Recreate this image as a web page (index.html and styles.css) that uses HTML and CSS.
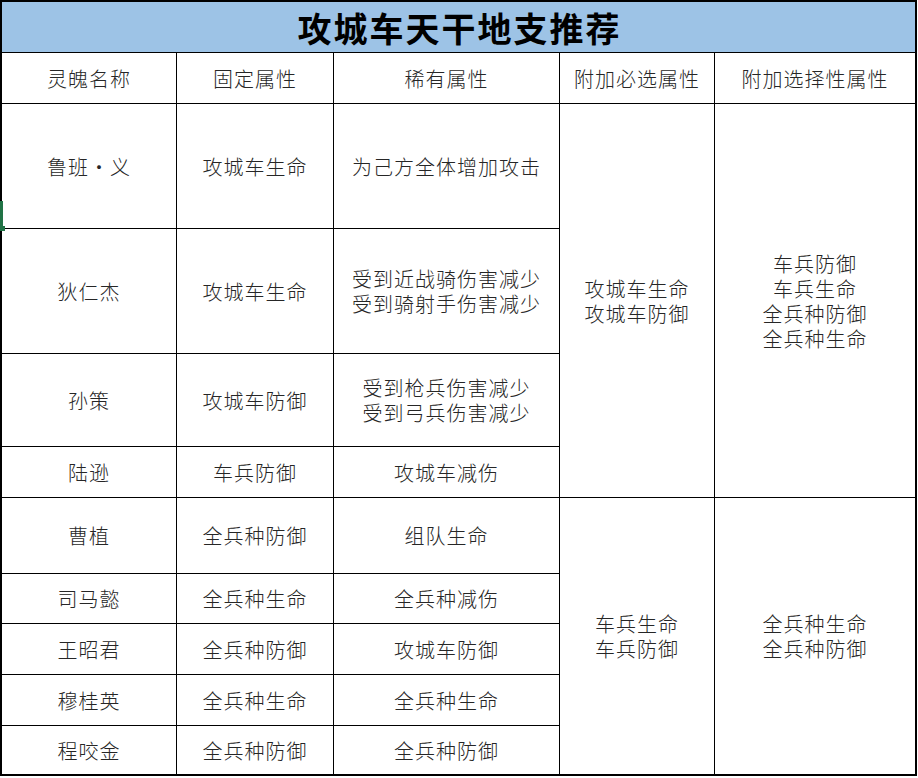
FILE: index.html
```html
<!DOCTYPE html>
<html lang="zh-CN">
<head>
<meta charset="utf-8">
<title>攻城车天干地支推荐</title>
<link rel="stylesheet" href="styles.css">
</head>
<body>
<div class="sheet">
  <div class="grid">
    <div class="cell title">攻城车天干地支推荐</div>

    <div class="cell head">灵魄名称</div>
    <div class="cell head">固定属性</div>
    <div class="cell head">稀有属性</div>
    <div class="cell head">附加必选属性</div>
    <div class="cell head">附加选择性属性</div>

    <div class="cell r1 c1">鲁班•义</div>
    <div class="cell r1 c2">攻城车生命</div>
    <div class="cell r1 c3">为己方全体增加攻击</div>
    <div class="cell must1">攻城车生命<br>攻城车防御</div>
    <div class="cell opt1">车兵防御<br>车兵生命<br>全兵种防御<br>全兵种生命</div>

    <div class="cell r2 c1">狄仁杰</div>
    <div class="cell r2 c2">攻城车生命</div>
    <div class="cell r2 c3">受到近战骑伤害减少<br>受到骑射手伤害减少</div>

    <div class="cell r3 c1">孙策</div>
    <div class="cell r3 c2">攻城车防御</div>
    <div class="cell r3 c3">受到枪兵伤害减少<br>受到弓兵伤害减少</div>

    <div class="cell r4 c1">陆逊</div>
    <div class="cell r4 c2">车兵防御</div>
    <div class="cell r4 c3">攻城车减伤</div>

    <div class="cell r5 c1">曹植</div>
    <div class="cell r5 c2">全兵种防御</div>
    <div class="cell r5 c3">组队生命</div>
    <div class="cell must2">车兵生命<br>车兵防御</div>
    <div class="cell opt2">全兵种生命<br>全兵种防御</div>

    <div class="cell r6 c1">司马懿</div>
    <div class="cell r6 c2">全兵种生命</div>
    <div class="cell r6 c3">全兵种减伤</div>

    <div class="cell r7 c1">王昭君</div>
    <div class="cell r7 c2">全兵种防御</div>
    <div class="cell r7 c3">攻城车防御</div>

    <div class="cell r8 c1">穆桂英</div>
    <div class="cell r8 c2">全兵种生命</div>
    <div class="cell r8 c3">全兵种生命</div>

    <div class="cell r9 c1">程咬金</div>
    <div class="cell r9 c2">全兵种防御</div>
    <div class="cell r9 c3">全兵种防御</div>
  </div>
  <div class="select-mark"></div>
</div>
</body>
</html>
```

FILE: styles.css
```css
html, body {
  margin: 0;
  padding: 0;
  background: #ffffff;
}

body {
  font-family: "Noto Sans CJK SC", "Noto Sans", sans-serif;
  color: #262626;
}

.sheet {
  position: relative;
  width: 917px;
  height: 776px;
}

.grid {
  box-sizing: border-box;
  width: 917px;
  height: 776px;
  border: 2px solid #000;
  background: #000;
  display: grid;
  grid-template-columns: 174px 156px 225px 154px 200px;
  grid-template-rows: 50px 50px 124px 124px 92px 50px 75px 49px 50px 50px 48px;
  gap: 1px;
}

.cell {
  background: #fff;
  display: flex;
  align-items: center;
  justify-content: center;
  text-align: center;
  font-size: 20px;
  line-height: 25px;
  letter-spacing: 1px;
  font-weight: 300;
}

.title {
  grid-column: 1 / 6;
  background: #9dc3e6;
  color: #000;
  font-size: 34px;
  font-weight: 700;
  letter-spacing: 2px;
  padding-left: 2px;
}

.c1 { grid-column: 1; }
.c2 { grid-column: 2; }
.c3 { grid-column: 3; }

.r1 { grid-row: 3; }
.r2 { grid-row: 4; }
.r3 { grid-row: 5; }
.r4 { grid-row: 6; }
.r5 { grid-row: 7; }
.r6 { grid-row: 8; }
.r7 { grid-row: 9; }
.r8 { grid-row: 10; }
.r9 { grid-row: 11; }

.must1 { grid-column: 4; grid-row: 3 / 7; }
.opt1  { grid-column: 5; grid-row: 3 / 7; }
.must2 { grid-column: 4; grid-row: 7 / 12; }
.opt2  { grid-column: 5; grid-row: 7 / 12; }

.select-mark {
  position: absolute;
  left: 0;
  top: 201px;
  width: 3px;
  height: 27px;
  background: #217346;
}

.select-mark::after {
  content: "";
  position: absolute;
  left: 0;
  top: 25px;
  width: 5px;
  height: 5px;
  background: #217346;
}
```
